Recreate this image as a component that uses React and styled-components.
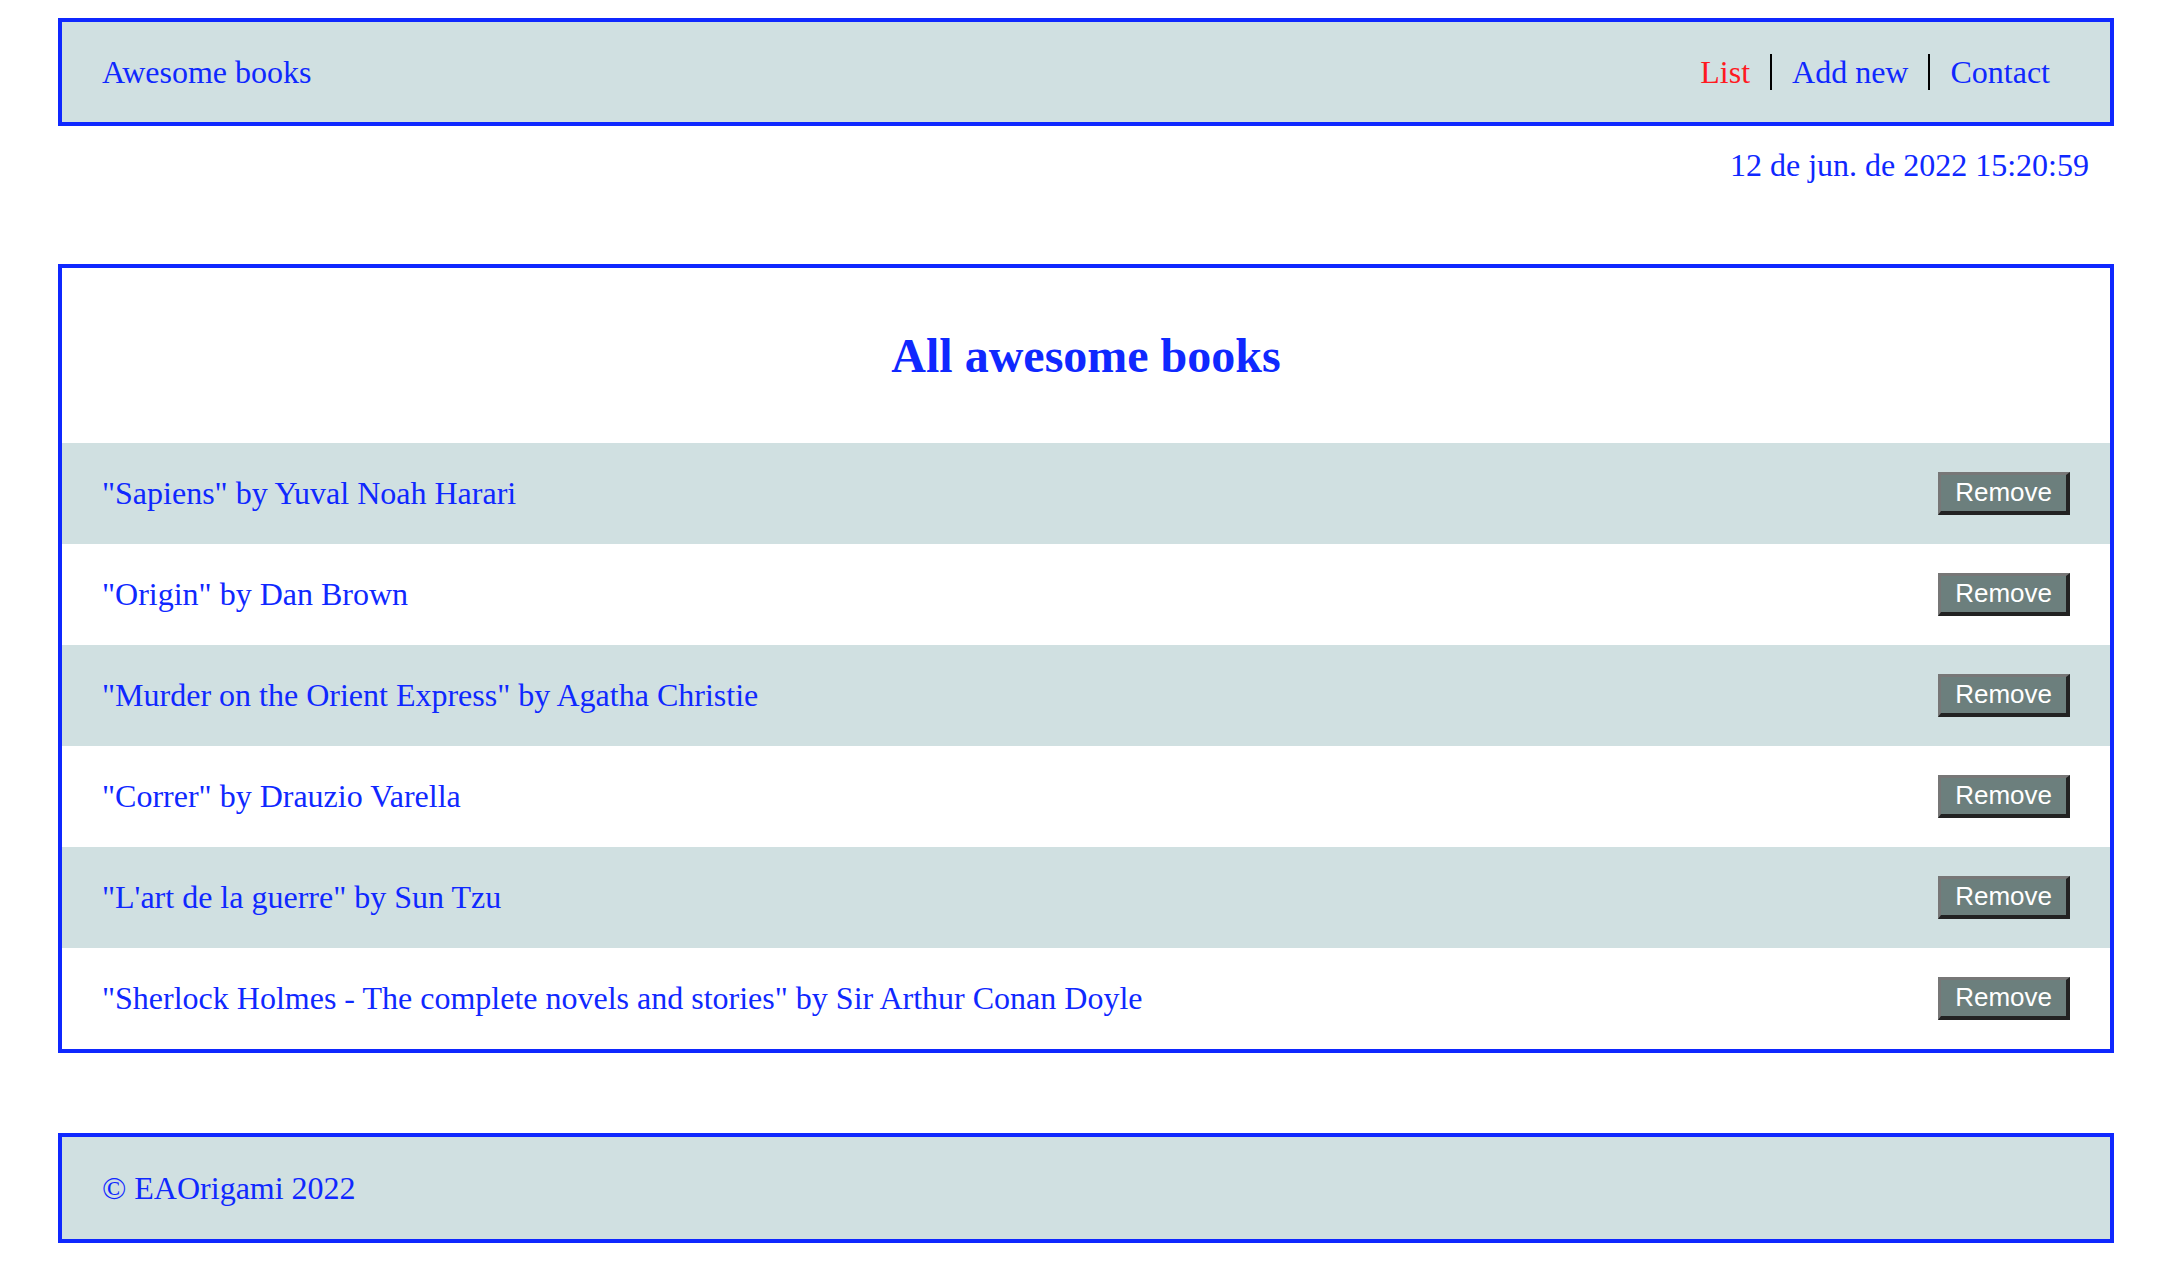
import React from "react";
import styled, { createGlobalStyle } from "styled-components";

const BLUE = "#0f28ff";
const PALE = "#d0e0e1";

const books = [
    { title: "Sapiens", author: "Yuval Noah Harari" },
    { title: "Origin", author: "Dan Brown" },
    { title: "Murder on the Orient Express", author: "Agatha Christie" },
    { title: "Correr", author: "Drauzio Varella" },
    { title: "L'art de la guerre", author: "Sun Tzu" },
    { title: "Sherlock Holmes - The complete novels and stories", author: "Sir Arthur Conan Doyle" },
];

const GlobalStyle = createGlobalStyle`
    html, body {
        margin: 0;
        padding: 0;
        background: #fff;
    }
    body {
        font-family: "Liberation Serif", "Times New Roman", serif;
        font-size: 32px;
        color: ${BLUE};
    }
`;

const Page = styled.div`
    padding: 18px 54px 21px 58px;
    display: flex;
    flex-direction: column;
`;

const Bar = styled.header`
    height: 100px;
    border: 4px solid ${BLUE};
    background: ${PALE};
    padding: 0 40px;
    display: flex;
    align-items: center;
    justify-content: space-between;
`;

const Brand = styled.span`
    font-size: 32px;
`;

const Nav = styled.ul`
    list-style: none;
    margin: 0;
    padding: 0;
    display: flex;
    align-items: center;
`;

const NavItem = styled.li`
    padding: 0 20px;
    line-height: 36.8px;
    color: ${(p) => (p.$active ? "#ff1a1f" : BLUE)};
    border-left: ${(p) => (p.$first ? "none" : "2px solid #000")};
    cursor: pointer;
`;

const DateLine = styled.p`
    margin: 21px 0 0;
    padding-right: 25px;
    text-align: right;
    line-height: 36.8px;
`;

const Books = styled.section`
    margin-top: 80px;
    border: 4px solid ${BLUE};
`;

const Title = styled.h2`
    margin: 0;
    padding: 61px 0 61px;
    font-size: 48px;
    font-weight: bold;
    line-height: 53px;
    text-align: center;
`;

const List = styled.ul`
    list-style: none;
    margin: 0;
    padding: 0;
`;

const Row = styled.li`
    height: 101px;
    padding: 0 40px;
    display: flex;
    align-items: center;
    justify-content: space-between;
    background: ${(p) => (p.$shaded ? PALE : "transparent")};
`;

const RemoveButton = styled.button`
    height: 43px;
    padding: 0 14px;
    border-style: solid;
    border-width: 3px 4px 4px 3px;
    border-color: #777 #222 #222 #777;
    background: #6c7f7d;
    color: #fff;
    font-family: "Liberation Sans", Arial, sans-serif;
    font-size: 26px;
    cursor: pointer;
`;

const Footer = styled.footer`
    margin-top: 80px;
    height: 100px;
    border: 4px solid ${BLUE};
    background: ${PALE};
    padding: 2px 40px 0;
    display: flex;
    align-items: center;
`;

const App = () => {
    return (
        <>
            <GlobalStyle />
            <Page>
                <Bar>
                    <Brand>Awesome books</Brand>
                    <Nav>
                        <NavItem $first $active>List</NavItem>
                        <NavItem>Add new</NavItem>
                        <NavItem>Contact</NavItem>
                    </Nav>
                </Bar>
                <DateLine>12 de jun. de 2022 15:20:59</DateLine>
                <Books>
                    <Title>All awesome books</Title>
                    <List>
                        {books.map((b, i) => (
                            <Row key={b.title} $shaded={i % 2 === 0}>
                                <span>"{b.title}" by {b.author}</span>
                                <RemoveButton>Remove</RemoveButton>
                            </Row>
                        ))}
                    </List>
                </Books>
                <Footer>© EAOrigami 2022</Footer>
            </Page>
        </>
    );
};

export default App;
